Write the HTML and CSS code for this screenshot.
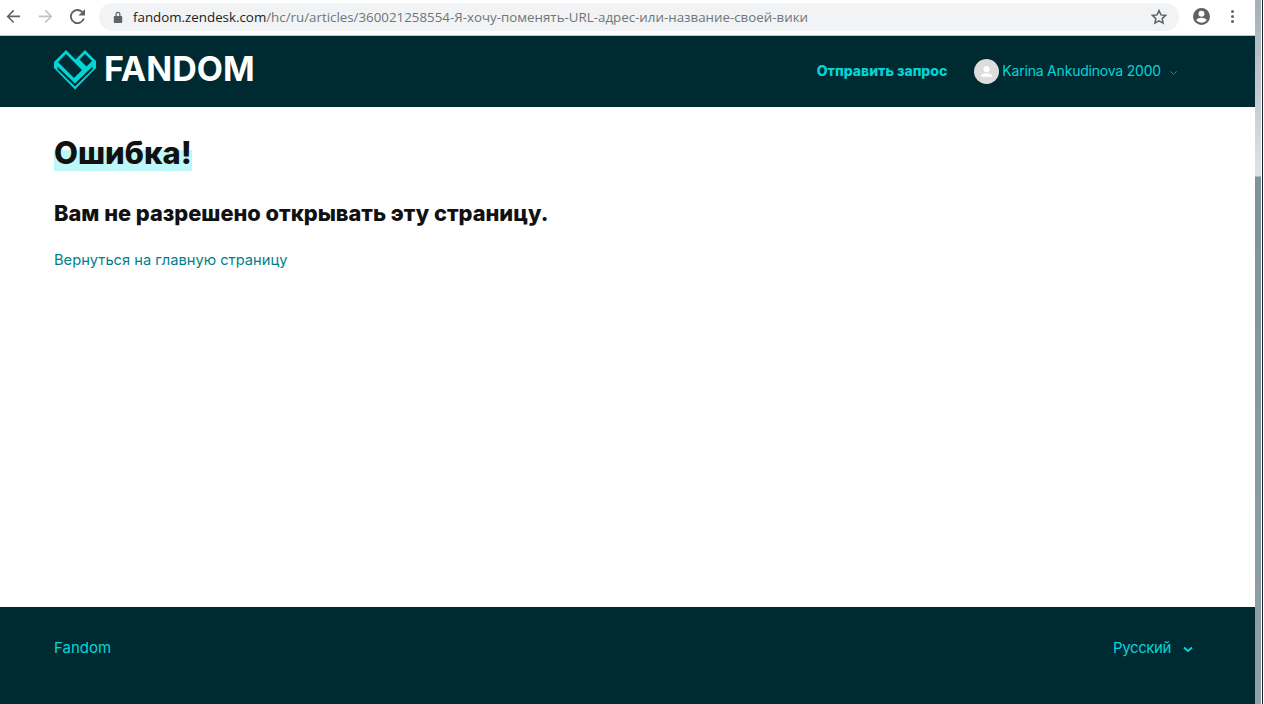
FILE: index.html
```html
<!DOCTYPE html>
<html lang="ru">
<head>
  <meta charset="UTF-8" />
  <meta name="viewport" content="width=device-width, initial-scale=1.0"/>
  <title>Ошибка!</title>
  <link rel="stylesheet" href="styles.css">
</head>
<body>
  <div class="window">
    <div class="toolbar">
      <svg class="tool-icon" viewBox="0 0 16 16"><path d="M15 7H3.800l5-5L7.600.9.600 8l7 7 1.200-1.100-5-5H15z" fill="#5f6368"/></svg>
      <svg class="tool-icon" viewBox="0 0 16 16"><path d="M1 7h11.200l-5-5L8.400.9l7 7.100-7 7-1.200-1.100 5-5H1z" fill="#bdc1c6"/></svg>
      <svg class="tool-icon" viewBox="0 0 16 16"><path d="M13.600 2.400A8 8 0 1 0 15.700 10h-2.100a6 6 0 1 1-1.400-6.200L9 7h7V0z" fill="#5f6368"/></svg>
      <div class="omnibox">
        <svg class="lock" viewBox="0 0 10 12"><path d="M2.500 5V3.300a2.500 2.500 0 0 1 5 0V5h.8c.5 0 .9.400.9.900v5.200c0 .5-.4.900-.9.900H1.700c-.5 0-.9-.4-.9-.9V5.900c0-.5.4-.9.900-.9zm1.200 0h2.600V3.300a1.300 1.300 0 0 0-2.600 0z" fill="#5f6368"/></svg>
        <span class="url"><b>fandom.zendesk.com</b>/hc/ru/articles/360021258554-Я-хочу-поменять-URL-адрес-или-название-своей-вики</span>
        <svg class="star" viewBox="0 0 24 24"><path d="M12 3.500l2.600 5.700 6.200.7-4.600 4.200 1.300 6.100L12 17.100l-5.500 3.100 1.300-6.100-4.600-4.200 6.200-.7z" fill="none" stroke="#5f6368" stroke-width="2"/></svg>
      </div>
      <svg class="account" viewBox="0 0 16 16"><path d="M8 0a8 8 0 1 0 0 16A8 8 0 0 0 8 0zm0 2.600a2.800 2.800 0 1 1 0 5.600 2.800 2.800 0 0 1 0-5.600zm0 11.200a6.200 6.200 0 0 1-5-2.600c.9-1.300 3.300-2 5-2s4.100.7 5 2a6.200 6.200 0 0 1-5 2.600z" fill="#5f6368"/></svg>
      <div class="dots"><i></i><i></i><i></i></div>
    </div>

    <header class="site-header">
      <a class="logo" href="#">
        <svg class="logo-mark" viewBox="0 0 42 42">
          <path d="M0 13L12 1l9.500 9.500L31 1l11 11v7L21 40.500 0 19z" fill="#00d6d6"/>
          <path d="M4 13l8-8 16 16-8 8z" fill="#002a32"/>
          <path d="M25.500 10.500L31 5l7 7-5.500 5.500z" fill="#002a32"/>
          <path d="M3.500 17.500L21 34.500l17.500-17v3L21 37.500 3.500 20.500z" fill="#002a32"/>
        </svg>
        <span class="logo-text">FANDOM</span>
      </a>
      <nav class="header-nav">
        <a class="submit-link" href="#">Отправить запрос</a>
        <div class="user">
          <span class="avatar">
            <svg viewBox="0 0 26 26"><circle cx="13" cy="10.500" r="3.300" fill="#fff"/><path d="M7 18.500c0-2.500 3-3.700 6-3.700s6 1.200 6 3.700z" fill="#fff"/></svg>
          </span>
          <span class="user-name">Karina Ankudinova 2000</span>
          <svg class="user-caret" viewBox="0 0 10 6"><path d="M1.500 1.200L5 4.500l3.500-3.300" fill="none" stroke="#00a5a5" stroke-width="1"/></svg>
        </div>
      </nav>
    </header>

    <main class="content">
      <h1><span class="marked">Ошибка!</span></h1>
      <h2>Вам не разрешено открывать эту страницу.</h2>
      <a class="home-link" href="#">Вернуться на главную страницу</a>
    </main>

    <footer class="site-footer">
      <a href="#">Fandom</a>
      <div class="lang">
        <span>Русский</span>
        <svg class="lang-caret" viewBox="0 0 10 7"><path d="M1 1.500l4 3.500 4-3.500" fill="none" stroke="#00d6d6" stroke-width="2"/></svg>
      </div>
    </footer>
  </div>

  <div class="scrollbar"></div>
</body>
</html>
```

FILE: styles.css
```css
* { margin: 0; padding: 0; box-sizing: border-box; }
html, body { height: 100%; }
body {
  display: flex; overflow: hidden; background: #fff;
  font-family: Inter, "Noto Sans", sans-serif; color: #111;
}
a { color: inherit; text-decoration: none; }

.window { flex: 0 0 1255px; display: flex; flex-direction: column; height: 704px; }

.scrollbar {
  flex: 0 0 8px; height: 704px;
  padding-right: 1px; border-right: 1px solid #1b2226;
  background: linear-gradient(#a3b0b8 0, #dfe3e6 176px, #7f929c 177px, #8fa0aa 704px) content-box;
}

/* browser bar */
.toolbar {
  flex: 0 0 36px; display: flex; align-items: center;
  padding: 0 0 2px 6px; background: #fff; border-bottom: 1px solid #c4c7ca;
}
.tool-icon { width: 15px; height: 15px; margin-right: 17px; flex: none; }
.tool-icon:nth-child(3) { margin-right: 14px; }
.omnibox {
  width: 1080px; height: 28px; border-radius: 14px; background: #f1f3f4;
  display: flex; align-items: center; padding: 0 11px 0 14px;
  margin-right: 14px; flex: none;
}
.lock { width: 10px; height: 12px; margin-right: 10px; flex: none; }
.url { font-family: "Open Sans", sans-serif; font-size: 13.330px; color: #70757a; white-space: nowrap; flex: 1; }
.url b { font-weight: 400; color: #202124; }
.star { width: 18px; height: 18px; flex: none; }
.account { width: 17px; height: 17px; flex: none; }
.dots { display: flex; flex-direction: column; gap: 2px; margin-left: 21px; }
.dots i { width: 3px; height: 3px; border-radius: 50%; background: #5f6368; }

/* site header */
.site-header {
  flex: 0 0 71px; background: #002a32;
  display: flex; align-items: center; justify-content: space-between;
  padding: 0 77px 0 54px;
}
.logo { display: flex; align-items: center; gap: 8px; margin-top: -4px; }
.logo-mark { width: 42px; height: 42px; flex: none; }
.logo-text { font-size: 34px; font-weight: 700; color: #fff; line-height: 42px; margin-top: -2px; }
.header-nav { display: flex; align-items: center; gap: 27px; }
.submit-link { font-size: 14px; font-weight: 800; color: #00d6d6; margin-top: -3px; }
.user { display: flex; align-items: center; color: #00d6d6; font-size: 14px; letter-spacing: -0.2px; }
.avatar { width: 25px; height: 25px; border-radius: 50%; background: #ddd; margin-right: 3px; display: flex; }
.avatar svg { width: 25px; height: 25px; }
.user-name { margin-top: -2px; }
.user-caret { width: 9px; height: 6px; margin-left: 8px; margin-top: 2px; }

/* content */
.content { flex: 1; padding: 27px 54px 0; }
h1 { font-size: 31px; font-weight: 800; line-height: 37px; }
.marked { background: linear-gradient(transparent 16px, #bdf7f7 16px); display: inline-block; }
h2 { font-size: 21.800px; font-weight: 800; line-height: 26px; margin-top: 29px; }
.home-link { display: block; margin-top: 24px; font-size: 14.700px; line-height: 20px; color: #007f8c; }

/* footer */
.site-footer {
  flex: 0 0 97px; background: #002a32; color: #00d6d6;
  display: flex; justify-content: space-between; align-items: flex-start;
  padding: 31px 62px 0 54px; font-size: 15px; line-height: 20px;
}
.lang { display: flex; align-items: center; gap: 12px; letter-spacing: -0.4px; }
.lang-caret { width: 10px; height: 7px; margin-top: 2px; }
```
